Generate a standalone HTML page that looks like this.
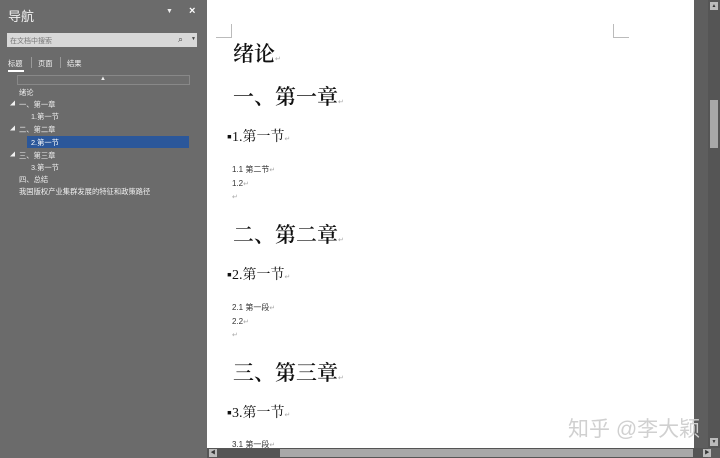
<!DOCTYPE html>
<html><head><meta charset="utf-8"><style>
*{margin:0;padding:0;box-sizing:border-box}
body{width:720px;height:458px;overflow:hidden;background:#6b6b6b;position:relative;font-family:"Liberation Sans","Noto Sans CJK SC",sans-serif}
.a{position:absolute;white-space:nowrap}
.nav{color:#f0f0f0;font-size:7.3px}
.doc{color:#111;font-family:"Liberation Serif","Noto Serif CJK SC",serif}
.h{font-weight:600}
.mk{color:#aaa;font-size:7px;font-weight:normal}
.sm{font-family:"Liberation Sans","Noto Sans CJK SC",sans-serif;font-size:8px;color:#333}
</style></head><body>
<div class="a" style="left:0;top:0;width:207px;height:458px;background:#6b6b6b"></div>
<div class="a" style="left:8px;top:6px;font-size:13px;color:#f2f2f2">导航</div>
<div class="a" style="left:166px;top:8px;font-size:7px;color:#eee">▼</div>
<div class="a" style="left:189px;top:5px;font-size:11px;color:#fff;font-weight:bold">×</div>
<div class="a" style="left:7px;top:33px;width:190px;height:14px;background:#d8d8d8"></div>
<div class="a" style="left:10px;top:36px;font-size:7px;color:#777">在文档中搜索</div>
<div class="a" style="left:178px;top:34px;font-size:9px;color:#444">⌕</div>
<div class="a" style="left:191px;top:36px;font-size:5px;color:#444">▼</div>
<div class="a nav" style="left:8px;top:59px">标题</div>
<div class="a" style="left:8px;top:70px;width:16px;height:2px;background:#fff"></div>
<div class="a" style="left:31px;top:57px;width:1px;height:11px;background:#999"></div>
<div class="a nav" style="left:38px;top:59px">页面</div>
<div class="a" style="left:60px;top:57px;width:1px;height:11px;background:#999"></div>
<div class="a nav" style="left:67px;top:59px">结果</div>
<div class="a" style="left:17px;top:75px;width:173px;height:10px;border:1px solid #888;background:#6e6e6e"></div>
<div class="a" style="left:100px;top:76px;font-size:6px;color:#eee">▲</div>
<div class="a nav" style="left:19px;top:88px">绪论</div>
<div class="a nav" style="left:10px;top:100px;font-size:5px">◢</div>
<div class="a nav" style="left:19px;top:100px">一、第一章</div>
<div class="a nav" style="left:31px;top:112px">1.第一节</div>
<div class="a nav" style="left:10px;top:125px;font-size:5px">◢</div>
<div class="a nav" style="left:19px;top:125px">二、第二章</div>
<div class="a" style="left:27px;top:136px;width:162px;height:12px;background:#2b579a"></div>
<div class="a nav" style="left:31px;top:138px;color:#fff">2.第一节</div>
<div class="a nav" style="left:10px;top:151px;font-size:5px">◢</div>
<div class="a nav" style="left:19px;top:151px">三、第三章</div>
<div class="a nav" style="left:31px;top:163px">3.第一节</div>
<div class="a nav" style="left:19px;top:175px">四、总结</div>
<div class="a nav" style="left:19px;top:187px">我国版权产业集群发展的特征和政策路径</div>

<div class="a" style="left:207px;top:0;width:487px;height:448px;background:#fff"></div>
<div class="a" style="left:216px;top:24px;width:16px;height:14px;border-right:1px solid #bbb;border-bottom:1px solid #bbb"></div>
<div class="a" style="left:613px;top:24px;width:16px;height:14px;border-left:1px solid #bbb;border-bottom:1px solid #bbb"></div>
<div class="a doc h" style="left:233px;top:38px;font-size:21px">绪论<span class="mk">↵</span></div>
<div class="a doc h" style="left:233px;top:81px;font-size:21px">一、第一章<span class="mk">↵</span></div>
<div class="a doc" style="left:227px;top:126px;font-size:14px">▪1.第一节<span class="mk">↵</span></div>
<div class="a sm" style="left:232px;top:164px">1.1 第二节<span class="mk">↵</span></div>
<div class="a sm" style="left:232px;top:179px">1.2<span class="mk">↵</span></div>
<div class="a mk" style="left:232px;top:193px">↵</div>
<div class="a doc h" style="left:233px;top:219px;font-size:21px">二、第二章<span class="mk">↵</span></div>
<div class="a doc" style="left:227px;top:264px;font-size:14px">▪2.第一节<span class="mk">↵</span></div>
<div class="a sm" style="left:232px;top:302px">2.1 第一段<span class="mk">↵</span></div>
<div class="a sm" style="left:232px;top:317px">2.2<span class="mk">↵</span></div>
<div class="a mk" style="left:232px;top:331px">↵</div>
<div class="a doc h" style="left:233px;top:357px;font-size:21px">三、第三章<span class="mk">↵</span></div>
<div class="a doc" style="left:227px;top:402px;font-size:14px">▪3.第一节<span class="mk">↵</span></div>
<div class="a sm" style="left:232px;top:439px">3.1 第一段<span class="mk">↵</span></div>

<div class="a" style="left:694px;top:0;width:26px;height:458px;background:#5e5e5e"></div>
<div class="a" style="left:708px;top:0;width:12px;height:448px;background:#555"></div>
<div class="a" style="left:710px;top:2px;width:8px;height:8px;background:#bbb;font-size:5px;text-align:center;line-height:8px;color:#333">▲</div>
<div class="a" style="left:710px;top:100px;width:8px;height:48px;background:#a8a8a8"></div>
<div class="a" style="left:710px;top:438px;width:8px;height:8px;background:#bbb;font-size:5px;text-align:center;line-height:8px;color:#333">▼</div>
<div class="a" style="left:207px;top:448px;width:501px;height:10px;background:#555"></div>
<div class="a" style="left:209px;top:449px;width:8px;height:8px;background:#bbb;font-size:5px;text-align:center;line-height:8px;color:#333">◀</div>
<div class="a" style="left:280px;top:449px;width:413px;height:8px;background:#a8a8a8"></div>
<div class="a" style="left:703px;top:449px;width:8px;height:8px;background:#bbb;font-size:5px;text-align:center;line-height:8px;color:#333">▶</div>
<div class="a" style="left:568px;top:413px;font-size:21px;color:#d0d0d0;font-family:'Liberation Sans','Noto Sans CJK SC',sans-serif">知乎 @李大颖</div>
</body></html>
